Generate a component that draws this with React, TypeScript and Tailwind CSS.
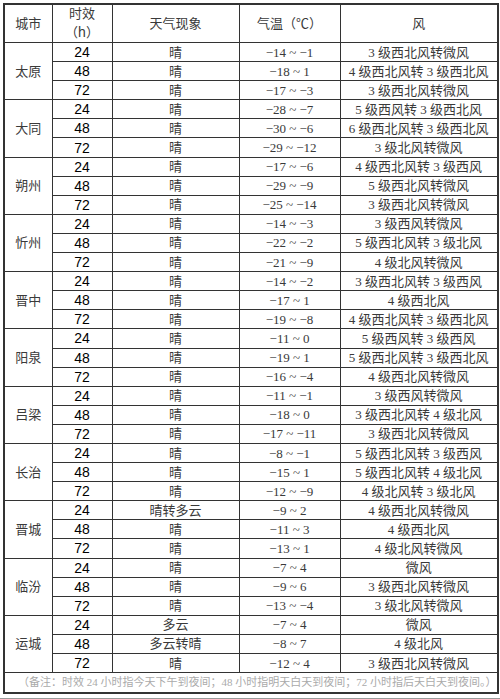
const rows: [string, [string, string, string, string][]][] = [
  ["太原", [
    ["24", "晴", "−14 ~ −1", "3 级西北风转微风"],
    ["48", "晴", "−18 ~ 1", "4 级西北风转 3 级西北风"],
    ["72", "晴", "−17 ~ −3", "3 级西北风转微风"],
  ]],
  ["大同", [
    ["24", "晴", "−28 ~ −7", "5 级西风转 3 级西北风"],
    ["48", "晴", "−30 ~ −6", "6 级西北风转 3 级西北风"],
    ["72", "晴", "−29 ~ −12", "3 级北风转微风"],
  ]],
  ["朔州", [
    ["24", "晴", "−17 ~ −6", "4 级西北风转 3 级西风"],
    ["48", "晴", "−29 ~ −9", "5 级西北风转微风"],
    ["72", "晴", "−25 ~ −14", "3 级西北风转微风"],
  ]],
  ["忻州", [
    ["24", "晴", "−14 ~ −3", "3 级西风转微风"],
    ["48", "晴", "−22 ~ −2", "5 级西北风转 3 级北风"],
    ["72", "晴", "−21 ~ −9", "4 级北风转微风"],
  ]],
  ["晋中", [
    ["24", "晴", "−14 ~ −2", "3 级西北风转 3 级西风"],
    ["48", "晴", "−17 ~ 1", "4 级西北风"],
    ["72", "晴", "−19 ~ −8", "4 级西北风转 3 级西北风"],
  ]],
  ["阳泉", [
    ["24", "晴", "−11 ~ 0", "5 级西风转 3 级西风"],
    ["48", "晴", "−19 ~ 1", "5 级西北风转 3 级西北风"],
    ["72", "晴", "−16 ~ −4", "4 级西北风转微风"],
  ]],
  ["吕梁", [
    ["24", "晴", "−11 ~ −1", "3 级西风转微风"],
    ["48", "晴", "−18 ~ 0", "3 级西北风转 4 级北风"],
    ["72", "晴", "−17 ~ −11", "3 级西北风转微风"],
  ]],
  ["长治", [
    ["24", "晴", "−8 ~ −1", "5 级西北风转 3 级西风"],
    ["48", "晴", "−15 ~ 1", "5 级西北风转 4 级北风"],
    ["72", "晴", "−12 ~ −9", "4 级北风转 3 级北风"],
  ]],
  ["晋城", [
    ["24", "晴转多云", "−9 ~ 2", "4 级西北风转微风"],
    ["48", "晴", "−11 ~ 3", "4 级西北风"],
    ["72", "晴", "−13 ~ 1", "4 级北风转微风"],
  ]],
  ["临汾", [
    ["24", "晴", "−7 ~ 4", "微风"],
    ["48", "晴", "−9 ~ 6", "3 级西北风转微风"],
    ["72", "晴", "−13 ~ −4", "3 级北风转微风"],
  ]],
  ["运城", [
    ["24", "多云", "−7 ~ 4", "微风"],
    ["48", "多云转晴", "−8 ~ 7", "4 级北风"],
    ["72", "晴", "−12 ~ 4", "3 级西北风转微风"],
  ]],
];

const serif = "font-['Liberation_Serif','Noto_Sans_CJK_SC',serif]";
const cell = "border border-[#333] text-center align-middle p-0";

export default function App() {
  return (
    <div className="w-[500px] h-[699px] bg-white overflow-hidden">
      <div className="pt-[3px] pl-[3px]">
        <table className="w-[494px] table-fixed border-collapse border-2 border-[#333] text-[13px] leading-none text-[#3a3a3a]">
          <colgroup>
            <col className="w-[48px]" />
            <col className="w-[60px]" />
            <col className="w-[127px]" />
            <col className="w-[101px]" />
            <col className="w-[158px]" />
          </colgroup>
          <thead>
            <tr className="h-[38px]">
              <th className={`${cell} ${serif} font-normal`}>城市</th>
              <th className={`${cell} ${serif} font-normal leading-[18px]`}>
                时效
                <br />（<span className="font-['Liberation_Sans',sans-serif] text-[14px]">h</span>）
              </th>
              <th className={`${cell} ${serif} font-normal`}>天气现象</th>
              <th className={`${cell} ${serif} font-normal`}>气温（℃）</th>
              <th className={`${cell} ${serif} font-normal`}>风</th>
            </tr>
          </thead>
          <tbody>
            {rows.map(([city, items]) =>
              items.map(([h, sky, temp, wind], i) => (
                <tr key={city + h} className="h-[19.1px]">
                  {i === 0 && (
                    <td rowSpan={3} className={`${cell} ${serif}`}>
                      {city}
                    </td>
                  )}
                  <td className={`${cell} font-['Liberation_Sans',sans-serif] text-[14px] text-black`}>{h}</td>
                  <td className={`${cell} ${serif}`}>{sky}</td>
                  <td className={`${cell} ${serif}`}>{temp}</td>
                  <td className={`${cell} ${serif}`}>{wind}</td>
                </tr>
              ))
            )}
            <tr className="h-[20px]">
              <td colSpan={5} className={`border border-[#333] p-0 pl-[13px] text-left align-middle text-[11px] text-[#aaa] ${serif}`}>
                （备注：时效 24 小时指今天下午到夜间；48 小时指明天白天到夜间；72 小时指后天白天到夜间。）
              </td>
            </tr>
          </tbody>
        </table>
      </div>
      <div className="mt-[4px] h-[2px] bg-[#999]" />
    </div>
  );
}
